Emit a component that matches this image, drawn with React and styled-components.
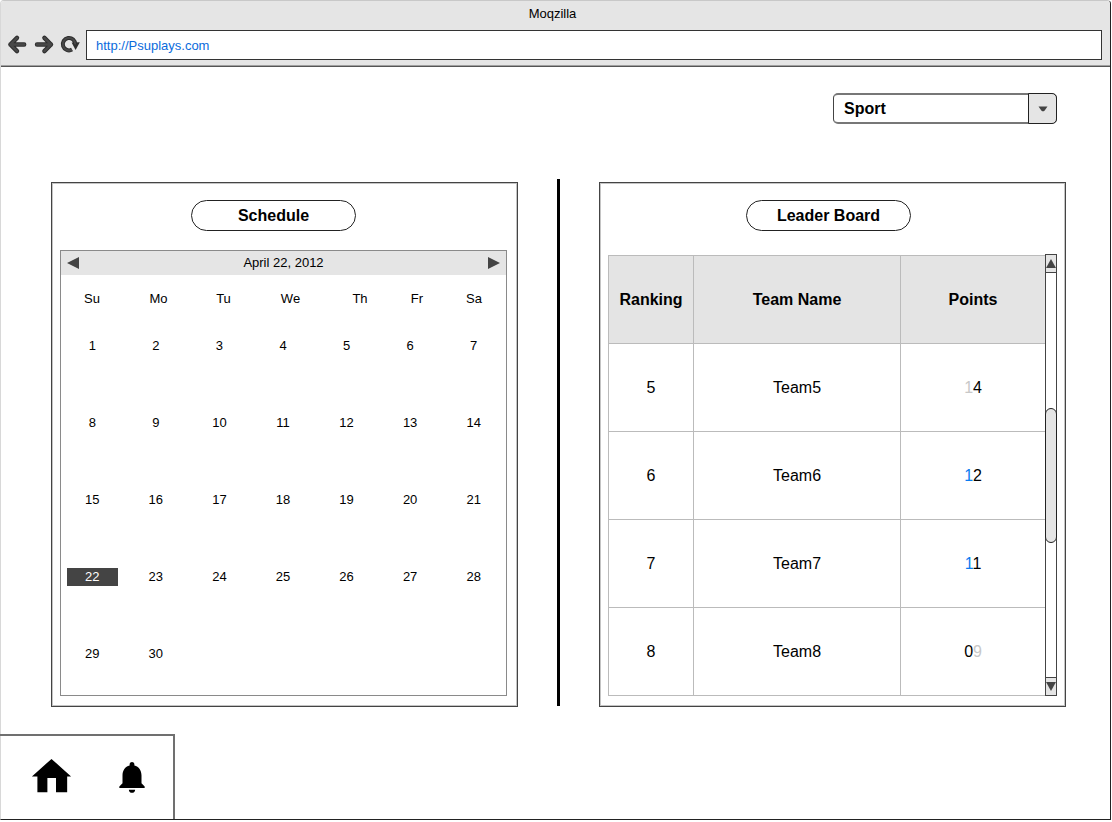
import React from "react";
import styled, { createGlobalStyle } from "styled-components";

const GlobalStyle = createGlobalStyle`
  * { box-sizing: border-box; }
  body {
    margin: 0;
    background: #fff;
    color: #000;
    font-family: "Liberation Sans", Arial, sans-serif;
    font-size: 16px;
  }
  button, input, select { font: inherit; color: inherit; margin: 0; }
`;

const BrowserWindow = styled.div`
  display: flex;
  flex-direction: column;
  min-height: calc(100vh - 2px);
  margin-right: 1px;
  border: 1px solid #222;
  border-left-color: #d8d8d8;
  border-top-color: #c8c8c8;
  border-radius: 4px 4px 0 0;
`;

const Chrome = styled.header`
  height: 66px;
  background: #e5e5e5;
  border-bottom: 1px solid #555;
  box-shadow: inset 0 -1px #a0a0a0;
  border-radius: 3px 3px 0 0;
`;

const WindowTitle = styled.div`
  padding-right: 6px;
  padding-top: 4px;
  height: 29px;
  font-size: 13px;
  line-height: 18px;
  text-align: center;
`;

const Toolbar = styled.div`
  display: flex;
  align-items: center;
  gap: 6px;
  padding: 0 8px 0 6px;
`;

const ToolButton = styled.button`
  display: flex;
  width: 20px;
  height: 20px;
  padding: 0;
  border: 0;
  background: none;
  svg { overflow: visible; }
`;

const Address = styled.input`
  flex: 1;
  min-width: 0;
  height: 30px;
  margin-left: 1px;
  padding: 0 9px;
  border: 1px solid #333;
  border-radius: 0;
  background: #fff;
  color: #0a6bdc;
  font-size: 13px;
`;

const Content = styled.main`
  display: flex;
  flex-direction: column;
  padding: 26px 44px 27px 50px;
`;

const SelectBox = styled.div`
  display: grid;
  grid-template-columns: 1fr 29px;
  align-self: flex-end;
  width: 224px;
  height: 31px;
  margin-right: 9px;
`;

const Select = styled.select`
  grid-area: 1 / 1 / 2 / 3;
  appearance: none;
  padding: 0 38px 0 10px;
  border: 1px solid #444;
  border-top: 2px solid #777;
  border-bottom: 2px solid #777;
  border-radius: 5px;
  background: #fff;
  font-weight: bold;
`;

const SelectArrow = styled.span`
  grid-area: 1 / 2 / 2 / 3;
  z-index: 1;
  display: flex;
  align-items: center;
  justify-content: center;
  border: 1px solid #222;
  border-radius: 0 5px 5px 0;
  background: #e5e5e5;
  pointer-events: none;
`;

const Columns = styled.div`
  display: grid;
  grid-template-columns: minmax(0, 1fr) 3px minmax(0, 1fr);
  gap: 39px;
  margin-top: 55px;
`;

const Divider = styled.div`
  margin-bottom: 1px;
  background: #000;
`;

const Panel = styled.section`
  margin-top: 3px;
  padding: 17px ${(p) => p.$inset}px 10px 8px;
  border: 1px solid #444;
  box-shadow: inset 0 0 0 1px #c4c4c4;
`;

const PillRow = styled.div`
  display: flex;
  justify-content: center;
  padding-right: ${(p) => p.$shift}px;
  margin-bottom: ${(p) => p.$gap}px;
`;

const Pill = styled.button`
  width: 165px;
  height: 31px;
  padding: 0;
  border: 1px solid #222;
  border-radius: 16px;
  background: #fff;
  font-weight: bold;
`;

const Calendar = styled.div`
  border: 1px solid #8a8a8a;
  font-size: 13px;
  line-height: 18px;
`;

const CalendarBar = styled.div`
  display: flex;
  align-items: center;
  justify-content: space-between;
  height: 24px;
  padding: 0 6px;
  background: #e5e5e5;
`;

const ArrowButton = styled.button`
  display: flex;
  padding: 0;
  border: 0;
  background: none;
`;

const DateLabel = styled.span`
  white-space: nowrap;
`;

const Month = styled.table`
  display: block;
  padding: 15px 0 32px;
  text-align: center;
`;

const MonthHead = styled.thead`
  display: block;
  margin-bottom: 29px;
`;

const MonthBody = styled.tbody`
  display: grid;
  gap: 59px;
`;

const WeekdayRow = styled.tr`
  display: grid;
  grid-template-columns: 62fr 71fr 59fr 75fr 64fr 50fr 64fr;
`;

const WeekRow = styled.tr`
  display: grid;
  grid-template-columns: repeat(7, 1fr);
`;

const Weekday = styled.th`
  padding: 0;
  font-weight: normal;
`;

const Day = styled.td`
  margin: 0 7px 0 6px;
  padding: 0;
  background: ${(p) => (p.$selected ? "#444" : "transparent")};
  color: ${(p) => (p.$selected ? "#fff" : "#000")};
`;

const Scroller = styled.div`
  display: flex;
`;

const Board = styled.table`
  flex: 1;
  margin-top: 1px;
  border-collapse: separate;
  border-spacing: 0;
  border-left: 1px solid #bbb;
  border-top: 1px solid #bbb;
  table-layout: fixed;
  text-align: center;
`;

const Col = styled.col`
  width: ${(p) => p.$share}%;
`;

const HeadCell = styled.th`
  height: 88px;
  padding: 0;
  border-right: 1px solid #bbb;
  border-bottom: 1px solid #bbb;
  background: #e4e4e4;
  &:last-child { border-right: 0; }
`;

const Cell = styled.td`
  height: 88px;
  padding: 0;
  border-right: 1px solid #bbb;
  border-bottom: 1px solid #bbb;
  &:last-child { border-right: 0; }
`;

const Digit = styled.span`
  color: ${(p) => p.$color};
`;

const Scrollbar = styled.div`
  display: flex;
  flex-direction: column;
  width: 12px;
  border: 1px solid #444;
`;

const ScrollButton = styled.button`
  display: flex;
  align-items: center;
  justify-content: center;
  height: 18px;
  padding: 0;
  border: 0 solid #444;
  border-width: ${(p) => (p.$up ? "0 0 1px" : "1px 0 0")};
  background: #e5e5e5;
`;

const Track = styled.div`
  flex: 1;
  padding-top: 135px;
`;

const Thumb = styled.div`
  height: 135px;
  margin: 0 -1px;
  border: 1px solid #222;
  border-radius: 6px;
  background: #e5e5e5;
`;

const BottomNav = styled.nav`
  display: flex;
  align-items: center;
  gap: 38px;
  width: 175px;
  height: 85px;
  margin-top: auto;
  margin-left: -1px;
  padding: 0 0 2px 28px;
  border: 0 solid #707070;
  border-width: 2px 2px 0 0;
`;

const NavLink = styled.a`
  display: flex;
  color: #000;
`;

function ArrowIcon({ d }) {
  return (
    <svg width="20" height="20" viewBox="0 0 20 20" fill="none" strokeLinecap="round" strokeLinejoin="round">
      <path d={d} stroke="#2e2e2e" strokeWidth="4.4" />
      <path d={d} stroke="#484848" strokeWidth="2.4" />
    </svg>
  );
}

function ReloadIcon() {
  const arc = "M13 14.6A6.2 6.2 0 1 1 16.2 9.4";
  return (
    <svg width="20" height="20" viewBox="0 0 20 20" fill="none">
      <path d={arc} stroke="#2e2e2e" strokeWidth="4" />
      <path d="M12.6 7.4L20.8 7.2L16.6 15Z" fill="#2e2e2e" />
      <path d={arc} stroke="#484848" strokeWidth="2" />
    </svg>
  );
}

function Triangle({ points, width, height }) {
  return (
    <svg width={width} height={height}>
      <polygon points={points} fill="#444" />
    </svg>
  );
}

const weekdays = ["Su", "Mo", "Tu", "We", "Th", "Fr", "Sa"];
const weeks = [0, 7, 14, 21, 28].map((start) =>
  weekdays.map((_, i) => start + i + 1).filter((day) => day <= 30)
);

const GREY = "#c8c8c8";
const BLUE = "#0a7cf0";
const teams = [
  { rank: 5, name: "Team5", points: [["1", GREY], ["4", "#000"]] },
  { rank: 6, name: "Team6", points: [["1", BLUE], ["2", "#000"]] },
  { rank: 7, name: "Team7", points: [["1", BLUE], ["1", "#000"]] },
  { rank: 8, name: "Team8", points: [["0", "#000"], ["9", GREY]] },
];

export default function App() {
  return (
    <BrowserWindow>
      <GlobalStyle />
      <Chrome>
        <WindowTitle>Moqzilla</WindowTitle>
        <Toolbar>
          <ToolButton aria-label="Back">
            <ArrowIcon d="M17.2 9.5H3.4M10 2.9L3.4 9.5L10 16.100" />
          </ToolButton>
          <ToolButton aria-label="Forward">
            <ArrowIcon d="M4 9.5H18M11.4 2.9L18 9.5L11.4 16.100" />
          </ToolButton>
          <ToolButton aria-label="Reload">
            <ReloadIcon />
          </ToolButton>
          <Address aria-label="Address" defaultValue="http://Psuplays.com" />
        </Toolbar>
      </Chrome>
      <Content>
        <SelectBox>
          <Select aria-label="Sport">
            <option>Sport</option>
          </Select>
          <SelectArrow>
            <svg width="10" height="6">
              <path d="M0.500 0.500H9.500L6.500 4.700Q5 6 3.500 4.700Z" fill="#444" />
            </svg>
          </SelectArrow>
        </SelectBox>
        <Columns>
          <Panel $inset={10}>
            <PillRow $shift={20} $gap={19}>
              <Pill>Schedule</Pill>
            </PillRow>
            <Calendar>
              <CalendarBar>
                <ArrowButton aria-label="Previous month">
                  <Triangle width={12} height={12} points="0,6 12,0 12,12" />
                </ArrowButton>
                <DateLabel>April 22, 2012</DateLabel>
                <ArrowButton aria-label="Next month">
                  <Triangle width={12} height={12} points="12,6 0,0 0,12" />
                </ArrowButton>
              </CalendarBar>
              <Month>
                <MonthHead>
                  <WeekdayRow>
                    {weekdays.map((day) => (
                      <Weekday key={day} scope="col">{day}</Weekday>
                    ))}
                  </WeekdayRow>
                </MonthHead>
                <MonthBody>
                  {weeks.map((week) => (
                    <WeekRow key={week[0]}>
                      {week.map((day) => (
                        <Day key={day} $selected={day === 22}>{day}</Day>
                      ))}
                    </WeekRow>
                  ))}
                </MonthBody>
              </Month>
            </Calendar>
          </Panel>
          <Divider />
          <Panel $inset={8}>
            <PillRow $shift={8} $gap={23}>
              <Pill>Leader Board</Pill>
            </PillRow>
            <Scroller>
              <Board>
                <colgroup>
                  <Col $share={19.5} />
                  <Col $share={47.5} />
                  <Col $share={33} />
                </colgroup>
                <thead>
                  <tr>
                    <HeadCell scope="col">Ranking</HeadCell>
                    <HeadCell scope="col">Team Name</HeadCell>
                    <HeadCell scope="col">Points</HeadCell>
                  </tr>
                </thead>
                <tbody>
                  {teams.map((team) => (
                    <tr key={team.rank}>
                      <Cell>{team.rank}</Cell>
                      <Cell>{team.name}</Cell>
                      <Cell>
                        {team.points.map(([digit, color], i) => (
                          <Digit key={i} $color={color}>{digit}</Digit>
                        ))}
                      </Cell>
                    </tr>
                  ))}
                </tbody>
              </Board>
              <Scrollbar>
                <ScrollButton $up aria-label="Scroll up">
                  <Triangle width={10} height={9} points="5,0 10,9 0,9" />
                </ScrollButton>
                <Track>
                  <Thumb />
                </Track>
                <ScrollButton aria-label="Scroll down">
                  <Triangle width={10} height={9} points="0,0 10,0 5,9" />
                </ScrollButton>
              </Scrollbar>
            </Scroller>
          </Panel>
        </Columns>
      </Content>
      <BottomNav>
        <NavLink href="#home" aria-label="Home">
          <svg width="47" height="47" viewBox="0 0 24 24" fill="currentColor">
            <path d="M9.900 20v-7.200h4.400V20h5.700v-8H22L12 3 2 12h2.800v8z" />
          </svg>
        </NavLink>
        <NavLink href="#notifications" aria-label="Notifications">
          <svg width="38" height="38" viewBox="0 0 24 24" fill="currentColor">
            <path d="M12 22c1.100 0 2-.9 2-2h-4c0 1.100.89 2 2 2zm6-6v-5c0-3.070-1.640-5.640-4.500-6.320V4c0-.83-.67-1.500-1.500-1.500s-1.500.67-1.500 1.500v.68C7.630 5.360 6 7.920 6 11v5l-2 2v1h16v-1l-2-2z" />
          </svg>
        </NavLink>
      </BottomNav>
    </BrowserWindow>
  );
}
